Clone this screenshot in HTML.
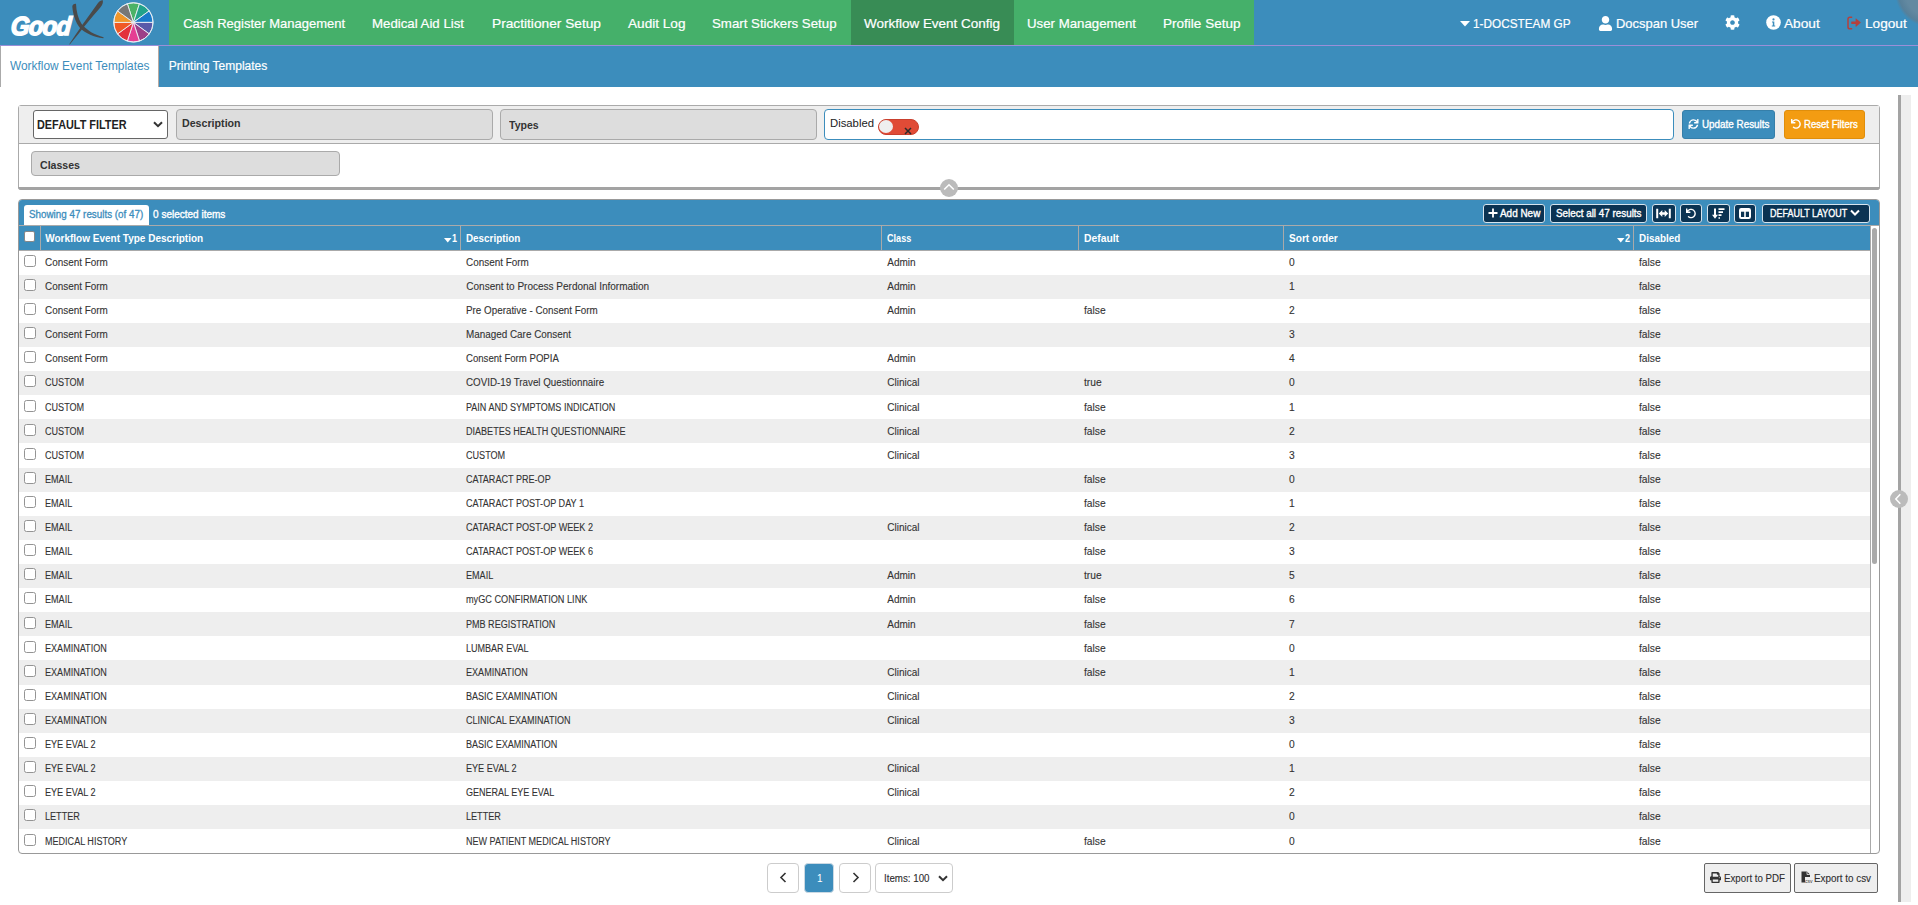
<!DOCTYPE html><html><head><meta charset="utf-8"><style>
html,body{margin:0;padding:0;}
body{width:1918px;height:905px;overflow:hidden;position:relative;background:#fff;font-family:"Liberation Sans",sans-serif;}
.t{position:absolute;white-space:nowrap;line-height:1;transform-origin:0 0;}
.r{-webkit-text-stroke:0.1px #333;}
.sw{-webkit-text-stroke:0.35px #fff;}
.b{position:absolute;box-sizing:border-box;}
svg{position:absolute;overflow:visible;}
</style></head><body>
<div class="b" style="left:0px;top:0px;width:1918px;height:45px;background:#3c8dbc"></div>
<div class="b" style="left:169px;top:0px;width:1085px;height:45px;background:#45b06a"></div>
<div class="b" style="left:851px;top:0px;width:163px;height:45px;background:#388c55"></div>
<div class="b" style="left:0px;top:45px;width:1918px;height:1px;background:#9a8fd8"></div>
<div class="b" style="left:1895px;top:-43px;width:70px;height:70px;border-radius:50%;background:radial-gradient(circle closest-side, #6389a1 0%, #6389a1 70%, #57809a 90%, rgba(60,141,188,0) 100%)"></div>
<span class="t" style="left:183.20px;top:17.10px;font-size:13px;color:#fff;-webkit-text-stroke:0.2px #fff;">Cash Register Management</span>
<span class="t" style="left:372.00px;top:17.10px;font-size:13px;color:#fff;transform:scaleX(1.0186);-webkit-text-stroke:0.2px #fff;">Medical Aid List</span>
<span class="t" style="left:492.00px;top:17.10px;font-size:13px;color:#fff;transform:scaleX(1.0548);-webkit-text-stroke:0.2px #fff;">Practitioner Setup</span>
<span class="t" style="left:627.50px;top:17.10px;font-size:13px;color:#fff;transform:scaleX(1.0467);-webkit-text-stroke:0.2px #fff;">Audit Log</span>
<span class="t" style="left:711.50px;top:17.10px;font-size:13px;color:#fff;transform:scaleX(1.0197);-webkit-text-stroke:0.2px #fff;">Smart Stickers Setup</span>
<span class="t" style="left:864.00px;top:17.10px;font-size:13px;color:#fff;transform:scaleX(1.0361);-webkit-text-stroke:0.2px #fff;">Workflow Event Config</span>
<span class="t" style="left:1027.00px;top:17.10px;font-size:13px;color:#fff;transform:scaleX(1.0193);-webkit-text-stroke:0.2px #fff;">User Management</span>
<span class="t" style="left:1163.00px;top:17.10px;font-size:13px;color:#fff;transform:scaleX(1.0412);-webkit-text-stroke:0.2px #fff;">Profile Setup</span>
<span class="t" style="left:1473.00px;top:17.10px;font-size:13px;color:#fff;transform:scaleX(0.9059);-webkit-text-stroke:0.2px #fff;">1-DOCSTEAM GP</span>
<span class="t" style="left:1616.00px;top:17.10px;font-size:13px;color:#fff;transform:scaleX(0.9955);-webkit-text-stroke:0.2px #fff;">Docspan User</span>
<span class="t" style="left:1783.80px;top:17.10px;font-size:13px;color:#fff;transform:scaleX(1.0508);-webkit-text-stroke:0.2px #fff;">About</span>
<span class="t" style="left:1864.60px;top:17.10px;font-size:13px;color:#fff;transform:scaleX(1.0487);-webkit-text-stroke:0.2px #fff;">Logout</span>
<div class="b" style="left:0px;top:46px;width:1918px;height:41px;background:#3c8dbc"></div>
<div class="b" style="left:0px;top:46px;width:159px;height:41px;background:#fff;border-left:1px solid #aaa;border-right:1px solid #b9a9a0"></div>
<span class="t" style="left:10.00px;top:59.94px;font-size:12px;color:#3c8dbc;transform:scaleX(0.9897);">Workflow Event Templates</span>
<span class="t" style="left:168.75px;top:59.94px;font-size:12px;color:#fff;-webkit-text-stroke:0.2px #fff;">Printing Templates</span>
<div class="b" style="left:18px;top:105px;width:1862px;height:85px;border:1px solid #aaa;border-radius:3px;background:#fff"></div>
<div class="b" style="left:19px;top:106px;width:1860px;height:37px;background:#eee"></div>
<div class="b" style="left:19px;top:143px;width:1860px;height:1px;background:#aaa"></div>
<div class="b" style="left:18px;top:187px;width:1862px;height:3px;background:#a3a3a3;border-radius:0 0 3px 3px"></div>
<div class="b" style="left:33px;top:110px;width:135px;height:29px;background:#fff;border:1px solid #666;border-radius:3px"></div>
<span class="t" style="left:37.40px;top:118.94px;font-size:12px;color:#222;font-weight:700;transform:scaleX(0.9052);">DEFAULT FILTER</span>
<svg style="left:153px;top:121px" width="10" height="7" viewBox="0 0 10 7"><path d="M1 1.2 L5 5.2 L9 1.2" fill="none" stroke="#333" stroke-width="2"/></svg>
<div class="b" style="left:176px;top:109px;width:317px;height:31px;background:#ddd;border:1px solid #aaa;border-radius:4px"></div>
<span class="t" style="left:181.50px;top:117.79px;font-size:11px;color:#333;font-weight:700;transform:scaleX(0.9684);">Description</span>
<div class="b" style="left:500px;top:109px;width:317px;height:31px;background:#ddd;border:1px solid #aaa;border-radius:4px"></div>
<span class="t" style="left:509.00px;top:119.79px;font-size:11px;color:#333;font-weight:700;transform:scaleX(0.9604);">Types</span>
<div class="b" style="left:824px;top:109px;width:850px;height:31px;background:#fff;border:1.5px solid #3c8dbc;border-radius:4px"></div>
<span class="t" style="left:829.70px;top:117.79px;font-size:11px;color:#222;transform:scaleX(1.0280);">Disabled</span>
<div class="b" style="left:878px;top:119px;width:41px;height:16px;background:#e04b36;border-radius:8px;border:1px solid #c9402e"></div>
<div class="b" style="left:879px;top:120px;width:14px;height:13px;background:#eee;border-radius:50%"></div>
<svg style="left:904px;top:127px" width="8" height="8" viewBox="0 0 8 8"><path d="M1 1 L7 7 M7 1 L1 7" stroke="#2b2b2b" stroke-width="1.5"/></svg>
<div class="b" style="left:1682px;top:110px;width:93px;height:29px;background:#3c8dbc;border:1px solid #367fa9;border-radius:3px"></div>
<svg style="left:1688px;top:119px" width="11" height="10" viewBox="0 0 512 512"><path fill="#fff" d="M440.65 12.57l4 82.77A247.16 247.16 0 0 0 255.83 8C134.73 8 33.91 94.92 12.29 209.82A12 12 0 0 0 24.09 224h49.05a12 12 0 0 0 11.67-9.26 175.91 175.91 0 0 1 317-56.94l-101.46-4.86a12 12 0 0 0-12.57 12v47.41a12 12 0 0 0 12 12H500a12 12 0 0 0 12-12V12a12 12 0 0 0-12-12h-47.37a12 12 0 0 0-11.98 12.57zM255.83 432a175.61 175.61 0 0 1-146-77.8l101.8 4.87a12 12 0 0 0 12.57-12v-47.4a12 12 0 0 0-12-12H12a12 12 0 0 0-12 12V500a12 12 0 0 0 12 12h47.35a12 12 0 0 0 12-12.6l-4.15-82.57A247.17 247.17 0 0 0 255.83 504c121.11 0 221.93-86.92 243.55-201.82a12 12 0 0 0-11.8-14.18h-49.05a12 12 0 0 0-11.67 9.26A175.86 175.86 0 0 1 255.83 432z"/></svg>
<span class="t sw" style="left:1701.80px;top:119.63px;font-size:10px;color:#fff;transform:scaleX(0.9858);">Update Results</span>
<div class="b" style="left:1784px;top:110px;width:81px;height:29px;background:#f39c12;border:1px solid #e08e0b;border-radius:3px"></div>
<svg style="left:1791px;top:119px" width="10" height="10" viewBox="0 0 512 512"><path fill="#fff" d="M212.333 224.333H12c-6.627 0-12-5.373-12-12V12C0 5.373 5.373 0 12 0h48c6.627 0 12 5.373 12 12v78.112C117.773 39.279 184.26 7.47 258.175 8.007c136.906.994 246.448 111.623 246.157 248.532C504.041 393.258 393.12 504 256.333 504c-64.089 0-122.496-24.313-166.51-64.215-5.099-4.622-5.334-12.554-.467-17.42l33.967-33.967c4.474-4.474 11.662-4.717 16.401-.525C170.76 415.336 211.58 432 256.333 432c97.268 0 176-78.716 176-176 0-97.267-78.716-176-176-176-58.496 0-110.28 28.476-142.274 72.333h98.274c6.627 0 12 5.373 12 12v48c0 6.627-5.373 12-12 12z"/></svg>
<span class="t sw" style="left:1804.20px;top:119.63px;font-size:10px;color:#fff;transform:scaleX(0.9568);">Reset Filters</span>
<div class="b" style="left:31px;top:151px;width:309px;height:25px;background:#ddd;border:1px solid #aaa;border-radius:4px"></div>
<span class="t" style="left:40.00px;top:159.79px;font-size:11px;color:#333;font-weight:700;transform:scaleX(0.9618);">Classes</span>
<div class="b" style="left:940px;top:179px;width:18px;height:18px;background:#bbb;border-radius:50%"></div>
<svg style="left:943px;top:183px" width="12" height="8" viewBox="0 0 12 8"><path d="M1.2 6.5 L6 1.8 L10.8 6.5" fill="none" stroke="#fff" stroke-width="1.6"/></svg>
<div class="b" style="left:18px;top:199px;width:1862px;height:655px;border:1px solid #999;border-radius:4px;background:#fff"></div>
<div class="b" style="left:19px;top:200px;width:1860px;height:26px;background:#3c8dbc;border-radius:3px 3px 0 0"></div>
<div class="b" style="left:19px;top:225px;width:1860px;height:1px;background:#aaa"></div>
<div class="b" style="left:23.5px;top:205px;width:125px;height:20px;background:#fff;border-radius:3px 3px 0 0"></div>
<span class="t" style="left:28.60px;top:209.63px;font-size:10px;color:#3c8dbc;transform:scaleX(0.9830);-webkit-text-stroke:0.3px #3c8dbc;">Showing 47 results (of 47)</span>
<span class="t sw" style="left:153.10px;top:209.63px;font-size:10px;color:#fff;">0 selected items</span>
<div class="b" style="left:1482.5px;top:204px;width:62.5px;height:19px;background:#0b3352;border:1px solid #d6e4ee;border-radius:3px"></div>
<div class="b" style="left:1550px;top:204px;width:96.5px;height:19px;background:#0b3352;border:1px solid #d6e4ee;border-radius:3px"></div>
<div class="b" style="left:1651.5px;top:204px;width:24.5px;height:19px;background:#0b3352;border:1px solid #d6e4ee;border-radius:3px"></div>
<div class="b" style="left:1680px;top:204px;width:22px;height:19px;background:#0b3352;border:1px solid #d6e4ee;border-radius:3px"></div>
<div class="b" style="left:1707px;top:204px;width:23px;height:19px;background:#0b3352;border:1px solid #d6e4ee;border-radius:3px"></div>
<div class="b" style="left:1734px;top:204px;width:22px;height:19px;background:#0b3352;border:1px solid #d6e4ee;border-radius:3px"></div>
<div class="b" style="left:1761.5px;top:204px;width:108.5px;height:19px;background:#0b3352;border:1px solid #d6e4ee;border-radius:3px"></div>
<svg style="left:1488px;top:208px" width="10" height="10" viewBox="0 0 10 10"><path d="M5 0.5 V9.5 M0.5 5 H9.5" stroke="#fff" stroke-width="1.8"/></svg>
<span class="t sw" style="left:1499.50px;top:208.63px;font-size:10px;color:#fff;transform:scaleX(0.9932);">Add New</span>
<span class="t sw" style="left:1555.80px;top:208.63px;font-size:10px;color:#fff;transform:scaleX(0.9861);">Select all 47 results</span>
<span class="t sw" style="left:1769.70px;top:208.63px;font-size:10px;color:#fff;transform:scaleX(0.8963);">DEFAULT LAYOUT</span>
<svg style="left:1850px;top:209px" width="10" height="8" viewBox="0 0 10 8"><path d="M1 1.5 L5 5.5 L9 1.5" fill="none" stroke="#fff" stroke-width="2"/></svg>
<svg style="left:1656px;top:208px" width="15" height="11" viewBox="0 0 15 11"><path d="M1.2 0.8 V10.2 M13.8 0.8 V10.2" stroke="#fff" stroke-width="2"/><path d="M2.8 5.5 L6.3 2 V4.3 H8.7 V2 L12.2 5.5 L8.7 9 V6.7 H6.3 V9 Z" fill="#fff"/></svg>
<svg style="left:1686px;top:208px" width="10" height="11" viewBox="0 0 512 512"><path fill="#fff" d="M212.333 224.333H12c-6.627 0-12-5.373-12-12V12C0 5.373 5.373 0 12 0h48c6.627 0 12 5.373 12 12v78.112C117.773 39.279 184.26 7.47 258.175 8.007c136.906.994 246.448 111.623 246.157 248.532C504.041 393.258 393.12 504 256.333 504c-64.089 0-122.496-24.313-166.51-64.215-5.099-4.622-5.334-12.554-.467-17.42l33.967-33.967c4.474-4.474 11.662-4.717 16.401-.525C170.76 415.336 211.58 432 256.333 432c97.268 0 176-78.716 176-176 0-97.267-78.716-176-176-176-58.496 0-110.28 28.476-142.274 72.333h98.274c6.627 0 12 5.373 12 12v48c0 6.627-5.373 12-12 12z"/></svg>
<svg style="left:1712px;top:208px" width="13" height="11" viewBox="0 0 13 11"><path d="M3 0.5 V8.5" stroke="#fff" stroke-width="2"/><path d="M0 6.8 L3 10.8 L6 6.8 Z" fill="#fff"/><path d="M6.5 1.2 H12.5 M6.5 4.2 H11 M6.5 7.2 H9.5 M6.5 10 H8" stroke="#fff" stroke-width="1.7"/></svg>
<svg style="left:1739px;top:208px" width="12" height="11" viewBox="0 0 12 11"><rect x="1" y="1" width="10" height="9" rx="1.2" fill="none" stroke="#fff" stroke-width="2"/><path d="M6 1 V10" stroke="#fff" stroke-width="1.6"/><path d="M1 2.6 H11" stroke="#fff" stroke-width="2.2"/></svg>
<div class="b" style="left:19px;top:226px;width:1851px;height:24px;background:#3c8dbc"></div>
<div class="b" style="left:19px;top:250px;width:1851px;height:1px;background:#aaa"></div>
<div class="b" style="left:40px;top:226px;width:1px;height:24px;background:#a9a9a9"></div>
<div class="b" style="left:460px;top:226px;width:1px;height:24px;background:#a9a9a9"></div>
<div class="b" style="left:881px;top:226px;width:1px;height:24px;background:#a9a9a9"></div>
<div class="b" style="left:1078px;top:226px;width:1px;height:24px;background:#a9a9a9"></div>
<div class="b" style="left:1283px;top:226px;width:1px;height:24px;background:#a9a9a9"></div>
<div class="b" style="left:1633px;top:226px;width:1px;height:24px;background:#a9a9a9"></div>
<div class="b" style="left:24px;top:231px;width:11px;height:11px;background:#fff;border:1px solid #888;border-radius:2px"></div>
<span class="t" style="left:45.20px;top:233.63px;font-size:10px;color:#fff;font-weight:700;">Workflow Event Type Description</span>
<span class="t" style="left:466.25px;top:233.63px;font-size:10px;color:#fff;font-weight:700;transform:scaleX(0.9862);">Description</span>
<span class="t" style="left:887.30px;top:233.63px;font-size:10px;color:#fff;font-weight:700;transform:scaleX(0.9088);">Class</span>
<span class="t" style="left:1083.75px;top:233.63px;font-size:10px;color:#fff;font-weight:700;transform:scaleX(1.0327);">Default</span>
<span class="t" style="left:1288.75px;top:233.63px;font-size:10px;color:#fff;font-weight:700;transform:scaleX(1.0085);">Sort order</span>
<span class="t" style="left:1638.80px;top:233.63px;font-size:10px;color:#fff;font-weight:700;transform:scaleX(0.9885);">Disabled</span>
<svg style="left:444.2px;top:238px" width="8" height="5" viewBox="0 0 8 5"><path d="M0 0 H7.5 L3.75 4.6 Z" fill="#fff"/></svg>
<span class="t" style="left:451.70px;top:233.63px;font-size:10px;color:#fff;font-weight:700;transform:scaleX(0.8990);">1</span>
<svg style="left:1617px;top:238px" width="8" height="5" viewBox="0 0 8 5"><path d="M0 0 H7.5 L3.75 4.6 Z" fill="#fff"/></svg>
<span class="t" style="left:1624.50px;top:233.63px;font-size:10px;color:#fff;font-weight:700;transform:scaleX(0.8990);">2</span>
<div class="b" style="left:24px;top:255px;width:12px;height:12px;background:#fff;border:1px solid #949494;border-radius:2.5px"></div>
<span class="t r" style="left:45.20px;top:257.64px;font-size:10px;color:#333;transform:scaleX(0.9909);">Consent Form</span>
<span class="t r" style="left:466.30px;top:257.64px;font-size:10px;color:#333;transform:scaleX(0.9909);">Consent Form</span>
<span class="t r" style="left:887.30px;top:257.64px;font-size:10px;color:#333;">Admin</span>
<span class="t r" style="left:1289.00px;top:257.64px;font-size:10px;color:#333;transform:scaleX(1.0240);">0</span>
<span class="t r" style="left:1638.80px;top:257.64px;font-size:10px;color:#333;transform:scaleX(1.0240);">false</span>
<div class="b" style="left:19px;top:275px;width:1851px;height:24px;background:#eee"></div>
<div class="b" style="left:24px;top:279px;width:12px;height:12px;background:#fff;border:1px solid #949494;border-radius:2.5px"></div>
<span class="t r" style="left:45.20px;top:281.64px;font-size:10px;color:#333;transform:scaleX(0.9909);">Consent Form</span>
<span class="t r" style="left:466.30px;top:281.64px;font-size:10px;color:#333;">Consent to Process Perdonal Information</span>
<span class="t r" style="left:887.30px;top:281.64px;font-size:10px;color:#333;">Admin</span>
<span class="t r" style="left:1289.00px;top:281.64px;font-size:10px;color:#333;transform:scaleX(1.0240);">1</span>
<span class="t r" style="left:1638.80px;top:281.64px;font-size:10px;color:#333;transform:scaleX(1.0240);">false</span>
<div class="b" style="left:24px;top:303px;width:12px;height:12px;background:#fff;border:1px solid #949494;border-radius:2.5px"></div>
<span class="t r" style="left:45.20px;top:305.64px;font-size:10px;color:#333;transform:scaleX(0.9909);">Consent Form</span>
<span class="t r" style="left:466.30px;top:305.64px;font-size:10px;color:#333;transform:scaleX(0.9836);">Pre Operative - Consent Form</span>
<span class="t r" style="left:887.30px;top:305.64px;font-size:10px;color:#333;">Admin</span>
<span class="t r" style="left:1084.00px;top:305.64px;font-size:10px;color:#333;transform:scaleX(1.0240);">false</span>
<span class="t r" style="left:1289.00px;top:305.64px;font-size:10px;color:#333;transform:scaleX(1.0240);">2</span>
<span class="t r" style="left:1638.80px;top:305.64px;font-size:10px;color:#333;transform:scaleX(1.0240);">false</span>
<div class="b" style="left:19px;top:323px;width:1851px;height:24px;background:#eee"></div>
<div class="b" style="left:24px;top:327px;width:12px;height:12px;background:#fff;border:1px solid #949494;border-radius:2.5px"></div>
<span class="t r" style="left:45.20px;top:329.64px;font-size:10px;color:#333;transform:scaleX(0.9909);">Consent Form</span>
<span class="t r" style="left:466.30px;top:329.64px;font-size:10px;color:#333;transform:scaleX(0.9888);">Managed Care Consent</span>
<span class="t r" style="left:1289.00px;top:329.64px;font-size:10px;color:#333;transform:scaleX(1.0240);">3</span>
<span class="t r" style="left:1638.80px;top:329.64px;font-size:10px;color:#333;transform:scaleX(1.0240);">false</span>
<div class="b" style="left:24px;top:351px;width:12px;height:12px;background:#fff;border:1px solid #949494;border-radius:2.5px"></div>
<span class="t r" style="left:45.20px;top:353.64px;font-size:10px;color:#333;transform:scaleX(0.9909);">Consent Form</span>
<span class="t r" style="left:466.30px;top:353.64px;font-size:10px;color:#333;transform:scaleX(0.9599);">Consent Form POPIA</span>
<span class="t r" style="left:887.30px;top:353.64px;font-size:10px;color:#333;">Admin</span>
<span class="t r" style="left:1289.00px;top:353.64px;font-size:10px;color:#333;transform:scaleX(1.0240);">4</span>
<span class="t r" style="left:1638.80px;top:353.64px;font-size:10px;color:#333;transform:scaleX(1.0240);">false</span>
<div class="b" style="left:19px;top:371px;width:1851px;height:24px;background:#eee"></div>
<div class="b" style="left:24px;top:375px;width:12px;height:12px;background:#fff;border:1px solid #949494;border-radius:2.5px"></div>
<span class="t r" style="left:45.20px;top:377.64px;font-size:10px;color:#333;transform:scaleX(0.9070);">CUSTOM</span>
<span class="t r" style="left:466.30px;top:377.64px;font-size:10px;color:#333;transform:scaleX(0.9787);">COVID-19 Travel Questionnaire</span>
<span class="t r" style="left:887.30px;top:377.64px;font-size:10px;color:#333;">Clinical</span>
<span class="t r" style="left:1084.00px;top:377.64px;font-size:10px;color:#333;transform:scaleX(1.0240);">true</span>
<span class="t r" style="left:1289.00px;top:377.64px;font-size:10px;color:#333;transform:scaleX(1.0240);">0</span>
<span class="t r" style="left:1638.80px;top:377.64px;font-size:10px;color:#333;transform:scaleX(1.0240);">false</span>
<div class="b" style="left:24px;top:400px;width:12px;height:12px;background:#fff;border:1px solid #949494;border-radius:2.5px"></div>
<span class="t r" style="left:45.20px;top:402.64px;font-size:10px;color:#333;transform:scaleX(0.9070);">CUSTOM</span>
<span class="t r" style="left:466.30px;top:402.64px;font-size:10px;color:#333;transform:scaleX(0.9019);">PAIN AND SYMPTOMS INDICATION</span>
<span class="t r" style="left:887.30px;top:402.64px;font-size:10px;color:#333;">Clinical</span>
<span class="t r" style="left:1084.00px;top:402.64px;font-size:10px;color:#333;transform:scaleX(1.0240);">false</span>
<span class="t r" style="left:1289.00px;top:402.64px;font-size:10px;color:#333;transform:scaleX(1.0240);">1</span>
<span class="t r" style="left:1638.80px;top:402.64px;font-size:10px;color:#333;transform:scaleX(1.0240);">false</span>
<div class="b" style="left:19px;top:419px;width:1851px;height:24px;background:#eee"></div>
<div class="b" style="left:24px;top:424px;width:12px;height:12px;background:#fff;border:1px solid #949494;border-radius:2.5px"></div>
<span class="t r" style="left:45.20px;top:426.64px;font-size:10px;color:#333;transform:scaleX(0.9070);">CUSTOM</span>
<span class="t r" style="left:466.30px;top:426.64px;font-size:10px;color:#333;transform:scaleX(0.9045);">DIABETES HEALTH QUESTIONNAIRE</span>
<span class="t r" style="left:887.30px;top:426.64px;font-size:10px;color:#333;">Clinical</span>
<span class="t r" style="left:1084.00px;top:426.64px;font-size:10px;color:#333;transform:scaleX(1.0240);">false</span>
<span class="t r" style="left:1289.00px;top:426.64px;font-size:10px;color:#333;transform:scaleX(1.0240);">2</span>
<span class="t r" style="left:1638.80px;top:426.64px;font-size:10px;color:#333;transform:scaleX(1.0240);">false</span>
<div class="b" style="left:24px;top:448px;width:12px;height:12px;background:#fff;border:1px solid #949494;border-radius:2.5px"></div>
<span class="t r" style="left:45.20px;top:450.64px;font-size:10px;color:#333;transform:scaleX(0.9070);">CUSTOM</span>
<span class="t r" style="left:466.30px;top:450.64px;font-size:10px;color:#333;transform:scaleX(0.9070);">CUSTOM</span>
<span class="t r" style="left:887.30px;top:450.64px;font-size:10px;color:#333;">Clinical</span>
<span class="t r" style="left:1289.00px;top:450.64px;font-size:10px;color:#333;transform:scaleX(1.0240);">3</span>
<span class="t r" style="left:1638.80px;top:450.64px;font-size:10px;color:#333;transform:scaleX(1.0240);">false</span>
<div class="b" style="left:19px;top:468px;width:1851px;height:24px;background:#eee"></div>
<div class="b" style="left:24px;top:472px;width:12px;height:12px;background:#fff;border:1px solid #949494;border-radius:2.5px"></div>
<span class="t r" style="left:45.20px;top:474.64px;font-size:10px;color:#333;transform:scaleX(0.9075);">EMAIL</span>
<span class="t r" style="left:466.30px;top:474.64px;font-size:10px;color:#333;transform:scaleX(0.9072);">CATARACT PRE-OP</span>
<span class="t r" style="left:1084.00px;top:474.64px;font-size:10px;color:#333;transform:scaleX(1.0240);">false</span>
<span class="t r" style="left:1289.00px;top:474.64px;font-size:10px;color:#333;transform:scaleX(1.0240);">0</span>
<span class="t r" style="left:1638.80px;top:474.64px;font-size:10px;color:#333;transform:scaleX(1.0240);">false</span>
<div class="b" style="left:24px;top:496px;width:12px;height:12px;background:#fff;border:1px solid #949494;border-radius:2.5px"></div>
<span class="t r" style="left:45.20px;top:498.64px;font-size:10px;color:#333;transform:scaleX(0.9075);">EMAIL</span>
<span class="t r" style="left:466.30px;top:498.64px;font-size:10px;color:#333;transform:scaleX(0.9074);">CATARACT POST-OP DAY 1</span>
<span class="t r" style="left:1084.00px;top:498.64px;font-size:10px;color:#333;transform:scaleX(1.0240);">false</span>
<span class="t r" style="left:1289.00px;top:498.64px;font-size:10px;color:#333;transform:scaleX(1.0240);">1</span>
<span class="t r" style="left:1638.80px;top:498.64px;font-size:10px;color:#333;transform:scaleX(1.0240);">false</span>
<div class="b" style="left:19px;top:516px;width:1851px;height:24px;background:#eee"></div>
<div class="b" style="left:24px;top:520px;width:12px;height:12px;background:#fff;border:1px solid #949494;border-radius:2.5px"></div>
<span class="t r" style="left:45.20px;top:522.63px;font-size:10px;color:#333;transform:scaleX(0.9075);">EMAIL</span>
<span class="t r" style="left:466.30px;top:522.63px;font-size:10px;color:#333;transform:scaleX(0.9082);">CATARACT POST-OP WEEK 2</span>
<span class="t r" style="left:887.30px;top:522.63px;font-size:10px;color:#333;">Clinical</span>
<span class="t r" style="left:1084.00px;top:522.63px;font-size:10px;color:#333;transform:scaleX(1.0240);">false</span>
<span class="t r" style="left:1289.00px;top:522.63px;font-size:10px;color:#333;transform:scaleX(1.0240);">2</span>
<span class="t r" style="left:1638.80px;top:522.63px;font-size:10px;color:#333;transform:scaleX(1.0240);">false</span>
<div class="b" style="left:24px;top:544px;width:12px;height:12px;background:#fff;border:1px solid #949494;border-radius:2.5px"></div>
<span class="t r" style="left:45.20px;top:546.63px;font-size:10px;color:#333;transform:scaleX(0.9075);">EMAIL</span>
<span class="t r" style="left:466.30px;top:546.63px;font-size:10px;color:#333;transform:scaleX(0.9082);">CATARACT POST-OP WEEK 6</span>
<span class="t r" style="left:1084.00px;top:546.63px;font-size:10px;color:#333;transform:scaleX(1.0240);">false</span>
<span class="t r" style="left:1289.00px;top:546.63px;font-size:10px;color:#333;transform:scaleX(1.0240);">3</span>
<span class="t r" style="left:1638.80px;top:546.63px;font-size:10px;color:#333;transform:scaleX(1.0240);">false</span>
<div class="b" style="left:19px;top:564px;width:1851px;height:24px;background:#eee"></div>
<div class="b" style="left:24px;top:568px;width:12px;height:12px;background:#fff;border:1px solid #949494;border-radius:2.5px"></div>
<span class="t r" style="left:45.20px;top:570.63px;font-size:10px;color:#333;transform:scaleX(0.9075);">EMAIL</span>
<span class="t r" style="left:466.30px;top:570.63px;font-size:10px;color:#333;transform:scaleX(0.9075);">EMAIL</span>
<span class="t r" style="left:887.30px;top:570.63px;font-size:10px;color:#333;">Admin</span>
<span class="t r" style="left:1084.00px;top:570.63px;font-size:10px;color:#333;transform:scaleX(1.0240);">true</span>
<span class="t r" style="left:1289.00px;top:570.63px;font-size:10px;color:#333;transform:scaleX(1.0240);">5</span>
<span class="t r" style="left:1638.80px;top:570.63px;font-size:10px;color:#333;transform:scaleX(1.0240);">false</span>
<div class="b" style="left:24px;top:592px;width:12px;height:12px;background:#fff;border:1px solid #949494;border-radius:2.5px"></div>
<span class="t r" style="left:45.20px;top:594.63px;font-size:10px;color:#333;transform:scaleX(0.9075);">EMAIL</span>
<span class="t r" style="left:466.30px;top:594.63px;font-size:10px;color:#333;transform:scaleX(0.9152);">myGC CONFIRMATION LINK</span>
<span class="t r" style="left:887.30px;top:594.63px;font-size:10px;color:#333;">Admin</span>
<span class="t r" style="left:1084.00px;top:594.63px;font-size:10px;color:#333;transform:scaleX(1.0240);">false</span>
<span class="t r" style="left:1289.00px;top:594.63px;font-size:10px;color:#333;transform:scaleX(1.0240);">6</span>
<span class="t r" style="left:1638.80px;top:594.63px;font-size:10px;color:#333;transform:scaleX(1.0240);">false</span>
<div class="b" style="left:19px;top:612px;width:1851px;height:24px;background:#eee"></div>
<div class="b" style="left:24px;top:617px;width:12px;height:12px;background:#fff;border:1px solid #949494;border-radius:2.5px"></div>
<span class="t r" style="left:45.20px;top:619.63px;font-size:10px;color:#333;transform:scaleX(0.9075);">EMAIL</span>
<span class="t r" style="left:466.30px;top:619.63px;font-size:10px;color:#333;transform:scaleX(0.9044);">PMB REGISTRATION</span>
<span class="t r" style="left:887.30px;top:619.63px;font-size:10px;color:#333;">Admin</span>
<span class="t r" style="left:1084.00px;top:619.63px;font-size:10px;color:#333;transform:scaleX(1.0240);">false</span>
<span class="t r" style="left:1289.00px;top:619.63px;font-size:10px;color:#333;transform:scaleX(1.0240);">7</span>
<span class="t r" style="left:1638.80px;top:619.63px;font-size:10px;color:#333;transform:scaleX(1.0240);">false</span>
<div class="b" style="left:24px;top:641px;width:12px;height:12px;background:#fff;border:1px solid #949494;border-radius:2.5px"></div>
<span class="t r" style="left:45.20px;top:643.63px;font-size:10px;color:#333;transform:scaleX(0.9062);">EXAMINATION</span>
<span class="t r" style="left:466.30px;top:643.63px;font-size:10px;color:#333;transform:scaleX(0.9031);">LUMBAR EVAL</span>
<span class="t r" style="left:1084.00px;top:643.63px;font-size:10px;color:#333;transform:scaleX(1.0240);">false</span>
<span class="t r" style="left:1289.00px;top:643.63px;font-size:10px;color:#333;transform:scaleX(1.0240);">0</span>
<span class="t r" style="left:1638.80px;top:643.63px;font-size:10px;color:#333;transform:scaleX(1.0240);">false</span>
<div class="b" style="left:19px;top:660px;width:1851px;height:25px;background:#eee"></div>
<div class="b" style="left:24px;top:665px;width:12px;height:12px;background:#fff;border:1px solid #949494;border-radius:2.5px"></div>
<span class="t r" style="left:45.20px;top:667.63px;font-size:10px;color:#333;transform:scaleX(0.9062);">EXAMINATION</span>
<span class="t r" style="left:466.30px;top:667.63px;font-size:10px;color:#333;transform:scaleX(0.9062);">EXAMINATION</span>
<span class="t r" style="left:887.30px;top:667.63px;font-size:10px;color:#333;">Clinical</span>
<span class="t r" style="left:1084.00px;top:667.63px;font-size:10px;color:#333;transform:scaleX(1.0240);">false</span>
<span class="t r" style="left:1289.00px;top:667.63px;font-size:10px;color:#333;transform:scaleX(1.0240);">1</span>
<span class="t r" style="left:1638.80px;top:667.63px;font-size:10px;color:#333;transform:scaleX(1.0240);">false</span>
<div class="b" style="left:24px;top:689px;width:12px;height:12px;background:#fff;border:1px solid #949494;border-radius:2.5px"></div>
<span class="t r" style="left:45.20px;top:691.63px;font-size:10px;color:#333;transform:scaleX(0.9062);">EXAMINATION</span>
<span class="t r" style="left:466.30px;top:691.63px;font-size:10px;color:#333;transform:scaleX(0.9045);">BASIC EXAMINATION</span>
<span class="t r" style="left:887.30px;top:691.63px;font-size:10px;color:#333;">Clinical</span>
<span class="t r" style="left:1289.00px;top:691.63px;font-size:10px;color:#333;transform:scaleX(1.0240);">2</span>
<span class="t r" style="left:1638.80px;top:691.63px;font-size:10px;color:#333;transform:scaleX(1.0240);">false</span>
<div class="b" style="left:19px;top:709px;width:1851px;height:24px;background:#eee"></div>
<div class="b" style="left:24px;top:713px;width:12px;height:12px;background:#fff;border:1px solid #949494;border-radius:2.5px"></div>
<span class="t r" style="left:45.20px;top:715.63px;font-size:10px;color:#333;transform:scaleX(0.9062);">EXAMINATION</span>
<span class="t r" style="left:466.30px;top:715.63px;font-size:10px;color:#333;transform:scaleX(0.9045);">CLINICAL EXAMINATION</span>
<span class="t r" style="left:887.30px;top:715.63px;font-size:10px;color:#333;">Clinical</span>
<span class="t r" style="left:1289.00px;top:715.63px;font-size:10px;color:#333;transform:scaleX(1.0240);">3</span>
<span class="t r" style="left:1638.80px;top:715.63px;font-size:10px;color:#333;transform:scaleX(1.0240);">false</span>
<div class="b" style="left:24px;top:737px;width:12px;height:12px;background:#fff;border:1px solid #949494;border-radius:2.5px"></div>
<span class="t r" style="left:45.20px;top:739.63px;font-size:10px;color:#333;transform:scaleX(0.9089);">EYE EVAL 2</span>
<span class="t r" style="left:466.30px;top:739.63px;font-size:10px;color:#333;transform:scaleX(0.9045);">BASIC EXAMINATION</span>
<span class="t r" style="left:1289.00px;top:739.63px;font-size:10px;color:#333;transform:scaleX(1.0240);">0</span>
<span class="t r" style="left:1638.80px;top:739.63px;font-size:10px;color:#333;transform:scaleX(1.0240);">false</span>
<div class="b" style="left:19px;top:757px;width:1851px;height:24px;background:#eee"></div>
<div class="b" style="left:24px;top:761px;width:12px;height:12px;background:#fff;border:1px solid #949494;border-radius:2.5px"></div>
<span class="t r" style="left:45.20px;top:763.63px;font-size:10px;color:#333;transform:scaleX(0.9089);">EYE EVAL 2</span>
<span class="t r" style="left:466.30px;top:763.63px;font-size:10px;color:#333;transform:scaleX(0.9089);">EYE EVAL 2</span>
<span class="t r" style="left:887.30px;top:763.63px;font-size:10px;color:#333;">Clinical</span>
<span class="t r" style="left:1289.00px;top:763.63px;font-size:10px;color:#333;transform:scaleX(1.0240);">1</span>
<span class="t r" style="left:1638.80px;top:763.63px;font-size:10px;color:#333;transform:scaleX(1.0240);">false</span>
<div class="b" style="left:24px;top:785px;width:12px;height:12px;background:#fff;border:1px solid #949494;border-radius:2.5px"></div>
<span class="t r" style="left:45.20px;top:787.63px;font-size:10px;color:#333;transform:scaleX(0.9089);">EYE EVAL 2</span>
<span class="t r" style="left:466.30px;top:787.63px;font-size:10px;color:#333;transform:scaleX(0.9017);">GENERAL EYE EVAL</span>
<span class="t r" style="left:887.30px;top:787.63px;font-size:10px;color:#333;">Clinical</span>
<span class="t r" style="left:1289.00px;top:787.63px;font-size:10px;color:#333;transform:scaleX(1.0240);">2</span>
<span class="t r" style="left:1638.80px;top:787.63px;font-size:10px;color:#333;transform:scaleX(1.0240);">false</span>
<div class="b" style="left:19px;top:805px;width:1851px;height:24px;background:#eee"></div>
<div class="b" style="left:24px;top:809px;width:12px;height:12px;background:#fff;border:1px solid #949494;border-radius:2.5px"></div>
<span class="t r" style="left:45.20px;top:811.63px;font-size:10px;color:#333;transform:scaleX(0.9075);">LETTER</span>
<span class="t r" style="left:466.30px;top:811.63px;font-size:10px;color:#333;transform:scaleX(0.9075);">LETTER</span>
<span class="t r" style="left:1289.00px;top:811.63px;font-size:10px;color:#333;transform:scaleX(1.0240);">0</span>
<span class="t r" style="left:1638.80px;top:811.63px;font-size:10px;color:#333;transform:scaleX(1.0240);">false</span>
<div class="b" style="left:24px;top:834px;width:12px;height:12px;background:#fff;border:1px solid #949494;border-radius:2.5px"></div>
<span class="t r" style="left:45.20px;top:836.63px;font-size:10px;color:#333;transform:scaleX(0.9041);">MEDICAL HISTORY</span>
<span class="t r" style="left:466.30px;top:836.63px;font-size:10px;color:#333;transform:scaleX(0.9016);">NEW PATIENT MEDICAL HISTORY</span>
<span class="t r" style="left:887.30px;top:836.63px;font-size:10px;color:#333;">Clinical</span>
<span class="t r" style="left:1084.00px;top:836.63px;font-size:10px;color:#333;transform:scaleX(1.0240);">false</span>
<span class="t r" style="left:1289.00px;top:836.63px;font-size:10px;color:#333;transform:scaleX(1.0240);">0</span>
<span class="t r" style="left:1638.80px;top:836.63px;font-size:10px;color:#333;transform:scaleX(1.0240);">false</span>
<div class="b" style="left:1870px;top:226px;width:1px;height:627px;background:#aaa"></div>
<div class="b" style="left:1872px;top:228px;width:5px;height:336px;background:#aaa;border-radius:3px"></div>
<div class="b" style="left:767px;top:863px;width:32px;height:30px;border:1px solid #ccc;border-radius:4px;background:#fff"></div>
<svg style="left:779px;top:872px" width="8" height="11" viewBox="0 0 8 11"><path d="M6.5 1 L2 5.5 L6.5 10" fill="none" stroke="#333" stroke-width="1.6"/></svg>
<div class="b" style="left:804px;top:863px;width:30px;height:30px;background:#3c8dbc;border:1px solid #cbd9e3;border-radius:4px"></div>
<span class="t" style="left:817.00px;top:873.63px;font-size:10px;color:#fff;">1</span>
<div class="b" style="left:839px;top:863px;width:32px;height:30px;border:1px solid #ccc;border-radius:4px;background:#fff"></div>
<svg style="left:852px;top:872px" width="8" height="11" viewBox="0 0 8 11"><path d="M1.5 1 L6 5.5 L1.5 10" fill="none" stroke="#333" stroke-width="1.6"/></svg>
<div class="b" style="left:875px;top:863px;width:78px;height:30px;border:1px solid #ccc;border-radius:4px;background:#fff"></div>
<span class="t r" style="left:883.90px;top:873.63px;font-size:10px;color:#2b2b2b;transform:scaleX(0.9745);">Items: 100</span>
<svg style="left:938px;top:875px" width="10" height="7" viewBox="0 0 10 7"><path d="M1 1.2 L5 5.2 L9 1.2" fill="none" stroke="#333" stroke-width="2"/></svg>
<div class="b" style="left:1704px;top:863px;width:87px;height:30px;background:#eee;border:1px solid #666;border-radius:2px"></div>
<svg style="left:1710px;top:872px" width="11" height="11" viewBox="0 0 512 512"><path fill="#333" d="M448 192V77.25c0-8.49-3.37-16.62-9.37-22.63L393.37 9.37c-6-6-14.14-9.37-22.63-9.37H96C78.33 0 64 14.33 64 32v160c-35.35 0-64 28.65-64 64v112c0 8.84 7.16 16 16 16h48v96c0 17.67 14.33 32 32 32h320c17.67 0 32-14.33 32-32v-96h48c8.84 0 16-7.16 16-16V256c0-35.35-28.65-64-64-64zm-64 256H128v-96h256v96zm0-224H128V64h192v48c0 8.84 7.16 16 16 16h48v96zm48 72c-13.25 0-24-10.75-24-24 0-13.26 10.75-24 24-24s24 10.74 24 24c0 13.25-10.75 24-24 24z"/></svg>
<span class="t r" style="left:1723.50px;top:873.63px;font-size:10px;color:#2b2b2b;transform:scaleX(0.9714);">Export to PDF</span>
<div class="b" style="left:1794px;top:863px;width:84px;height:30px;background:#eee;border:1px solid #666;border-radius:2px"></div>
<svg style="left:1801px;top:871px" width="11" height="12" viewBox="0 0 11 12"><path d="M0.5 0.5 H6 L9 3.5 V6 H4 V11.5 H0.5 Z" fill="#333"/><path d="M6 0.5 V3.5 H9" fill="none" stroke="#eee" stroke-width="0.8"/><text x="4" y="11.5" font-size="5" font-family="Liberation Sans" fill="#333">csv</text></svg>
<span class="t r" style="left:1814.40px;top:873.63px;font-size:10px;color:#2b2b2b;transform:scaleX(0.9862);">Export to csv</span>
<div class="b" style="left:1898px;top:95px;width:3px;height:807px;background:#a3a3a3"></div>
<div class="b" style="left:1901px;top:95px;width:10px;height:807px;background:#eee"></div>
<div class="b" style="left:1890px;top:490px;width:18px;height:18px;background:#bbb;border-radius:50%"></div>
<svg style="left:1894px;top:493px" width="8" height="12" viewBox="0 0 8 12"><path d="M6.3 1.2 L1.8 6 L6.3 10.8" fill="none" stroke="#fff" stroke-width="1.5"/></svg>
<svg style="left:0;top:0" width="170" height="45" viewBox="0 0 170 45"><path d="M133.40 22.40 L127.34 3.76 A19.6 19.6 0 0 1 139.46 3.76 Z" fill="#4bb266" stroke="#eef3f7" stroke-width="0.9"/><path d="M133.40 22.40 L139.46 3.76 A19.6 19.6 0 0 1 149.26 10.88 Z" fill="#22a38a" stroke="#eef3f7" stroke-width="0.9"/><path d="M133.40 22.40 L149.26 10.88 A19.6 19.6 0 0 1 153.00 22.40 Z" fill="#1a7bc9" stroke="#eef3f7" stroke-width="0.9"/><path d="M133.40 22.40 L153.00 22.40 A19.6 19.6 0 0 1 149.26 33.92 Z" fill="#5a5aa9" stroke="#eef3f7" stroke-width="0.9"/><path d="M133.40 22.40 L149.26 33.92 A19.6 19.6 0 0 1 139.46 41.04 Z" fill="#9d3f88" stroke="#eef3f7" stroke-width="0.9"/><path d="M133.40 22.40 L139.46 41.04 A19.6 19.6 0 0 1 127.34 41.04 Z" fill="#e53e93" stroke="#eef3f7" stroke-width="0.9"/><path d="M133.40 22.40 L127.34 41.04 A19.6 19.6 0 0 1 117.54 33.92 Z" fill="#e3323b" stroke="#eef3f7" stroke-width="0.9"/><path d="M133.40 22.40 L117.54 33.92 A19.6 19.6 0 0 1 113.80 22.40 Z" fill="#f05a24" stroke="#eef3f7" stroke-width="0.9"/><path d="M133.40 22.40 L113.80 22.40 A19.6 19.6 0 0 1 117.54 10.88 Z" fill="#f0962a" stroke="#eef3f7" stroke-width="0.9"/><path d="M133.40 22.40 L117.54 10.88 A19.6 19.6 0 0 1 127.34 3.76 Z" fill="#777777" stroke="#eef3f7" stroke-width="0.9"/><circle cx="133.4" cy="22.4" r="19.6" fill="none" stroke="#e8eef3" stroke-width="0.9"/><path d="M72.3 6.5 C72.2 5 74 3.6 76 3.8 C76.3 11 78 18.5 81.5 23.8 C86.5 30.5 95 35 103.6 37.2 L103.4 38.3 C94 37 85.5 33.5 80 28 C75.5 22.5 72.8 14 72.3 6.5 Z" fill="#4a4a4a"/><path d="M102.8 0.2 C103.2 2.5 102.6 5 100.5 7.2 C92.5 16.5 80.5 31 69.8 44.6 L69.2 44.2 C77.5 31.5 87.5 17.5 97.8 3.2 C99.3 1.2 101.2 0 102.8 0.2 Z" fill="#4a4a4a"/></svg>
<span class="t" style="left:10.3px;top:12.6px;font-size:26px;font-weight:700;font-style:italic;color:#fff;letter-spacing:-0.9px;-webkit-text-stroke:1.5px #fff;transform:scaleX(0.926) skewX(-5deg);transform-origin:0 100%">Good</span>
<svg style="left:1460px;top:21px" width="10" height="6" viewBox="0 0 10 6"><path d="M0 0 H10 L5 5.5 Z" fill="#fff"/></svg>
<svg style="left:1598px;top:15.5px" width="15" height="15" viewBox="0 0 448 512"><path fill="#fff" d="M224 256c70.7 0 128-57.3 128-128S294.7 0 224 0 96 57.3 96 128s57.3 128 128 128zm89.6 32h-16.7c-22.2 10.2-46.9 16-72.9 16s-50.6-5.8-72.9-16h-16.7C60.2 288 0 348.2 0 422.4V464c0 26.5 21.5 48 48 48h352c26.5 0 48-21.5 48-48v-41.6c0-74.2-60.2-134.4-134.4-134.4z"/></svg>
<svg style="left:1724.5px;top:15px" width="15" height="15" viewBox="0 0 512 512"><path fill="#fff" d="M487.4 315.7l-42.6-24.6c4.3-23.2 4.3-47 0-70.2l42.6-24.6c4.9-2.8 7.1-8.6 5.5-14-11.1-35.6-30-67.8-54.7-94.6-3.8-4.1-10-5.1-14.8-2.3L380.8 110c-17.9-15.4-38.5-27.3-60.8-35.1V25.8c0-5.6-3.9-10.5-9.4-11.7-36.7-8.2-74.3-7.8-109.2 0-5.5 1.2-9.4 6.1-9.4 11.7V75c-22.2 7.9-42.8 19.8-60.8 35.1L88.7 85.5c-4.9-2.8-11-1.9-14.8 2.3-24.7 26.7-43.6 58.9-54.7 94.6-1.7 5.4.6 11.2 5.5 14L67.3 221c-4.3 23.2-4.3 47 0 70.2l-42.6 24.6c-4.9 2.8-7.1 8.6-5.5 14 11.1 35.6 30 67.8 54.7 94.6 3.8 4.1 10 5.1 14.8 2.3l42.6-24.6c17.9 15.4 38.5 27.3 60.8 35.1v49.2c0 5.6 3.9 10.5 9.4 11.7 36.7 8.2 74.3 7.8 109.2 0 5.5-1.2 9.4-6.1 9.4-11.7v-49.2c22.2-7.9 42.8-19.8 60.8-35.1l42.6 24.6c4.9 2.8 11 1.9 14.8-2.3 24.7-26.7 43.6-58.9 54.7-94.6 1.5-5.5-.7-11.3-5.6-14.1zM256 336c-44.1 0-80-35.9-80-80s35.9-80 80-80 80 35.9 80 80-35.9 80-80 80z"/></svg>
<svg style="left:1766px;top:15px" width="15" height="15" viewBox="0 0 15 15"><circle cx="7.5" cy="7.5" r="7.3" fill="#fff"/><circle cx="7.5" cy="4.4" r="1.1" fill="#3c8dbc"/><path d="M6 6.4 H8.3 V10.6 H9.2 V11.6 H5.8 V10.6 H6.8 V7.4 H6 Z" fill="#3c8dbc"/></svg>
<svg style="left:1847px;top:16px" width="15" height="14" viewBox="0 0 15 14"><path d="M4.6 1.3 H2.9 Q1 1.3 1 3.2 V10.9 Q1 12.8 2.9 12.8 H4.6" fill="none" stroke="#b5403d" stroke-width="1.5" stroke-linecap="round"/><path d="M4.6 5.6 H8.6 V2.6 Q8.8 2.3 9.1 2.5 L13.9 6.6 L9.1 10.7 Q8.8 10.9 8.6 10.6 V7.9 H4.6 Q4.2 7.9 4.2 7.5 V6 Q4.2 5.6 4.6 5.6 Z" fill="#b5403d"/></svg>
</body></html>
